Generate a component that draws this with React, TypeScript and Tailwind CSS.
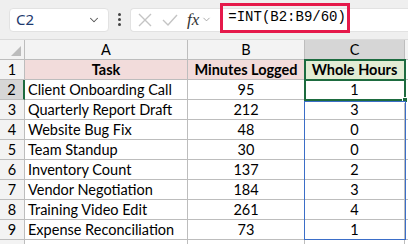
import { ChevronDown } from 'lucide-react';

const rows = [
  { task: 'Client Onboarding Call', mins: 95, hours: 1 },
  { task: 'Quarterly Report Draft', mins: 212, hours: 3 },
  { task: 'Website Bug Fix', mins: 48, hours: 0 },
  { task: 'Team Standup', mins: 30, hours: 0 },
  { task: 'Inventory Count', mins: 137, hours: 2 },
  { task: 'Vendor Negotiation', mins: 184, hours: 3 },
  { task: 'Training Video Edit', mins: 261, hours: 4 },
  { task: 'Expense Reconciliation', mins: 73, hours: 1 },
];

const cols = 'grid grid-cols-[25px_163px_117px_100px_3px]';
const cell = 'h-[20px] border-r border-b border-[#bdbdbd] flex items-center text-[14.5px] text-black';

export default function App() {
  return (
    <div className="w-[408px] h-[244px] overflow-hidden bg-white font-['Lato',sans-serif]">
      {/* Formula bar */}
      <div className="h-[40px] bg-[#efefef] flex items-center pl-[9px] gap-[9px] border-b border-[#dadada]">
        <div className="w-[100px] h-[24px] bg-white rounded-[4px] border border-[#e2e2e2] flex items-center justify-between pl-[6px] pr-[7px]">
          <span className="text-[15px] text-[#1e3a6e] font-['Noto_Sans',sans-serif]">C2</span>
          <ChevronDown size={14} strokeWidth={1.8} className="text-[#555]" />
        </div>
        <div className="flex flex-col gap-[2px] w-[3px]">
          <span className="w-[3px] h-[3px] rounded-full bg-[#444]" />
          <span className="w-[3px] h-[3px] rounded-full bg-[#444]" />
          <span className="w-[3px] h-[3px] rounded-full bg-[#444]" />
        </div>
        <div className="flex-1 h-[24px] bg-white rounded-l-[4px] border border-r-0 border-[#e2e2e2] flex items-center pl-[6px]">
          <svg width="14" height="14" viewBox="0 0 14 14" className="ml-[1px]">
            <path d="M1 1 L13 13 M13 1 L1 13" stroke="#c4c4c4" strokeWidth="1.4" />
          </svg>
          <svg width="16" height="14" viewBox="0 0 16 14" className="ml-[10px]">
            <path d="M1 7 L6 12 L15 2" stroke="#c4c4c4" strokeWidth="1.4" fill="none" />
          </svg>
          <span className="ml-[9px] text-[17px] italic text-[#333] font-['Liberation_Serif',serif]">fx</span>
          <ChevronDown size={11} strokeWidth={1.8} className="ml-[2px] text-[#999]" />
          <div className="relative -top-[2px] ml-[8px] h-[30px] w-[130px] border-[3px] border-[#e5194a] flex items-center pl-[5px]">
            <span className="text-[14px] text-black font-['Liberation_Mono',monospace]">=INT(B2:B9/60)</span>
          </div>
        </div>
      </div>

      {/* Sheet */}
      <div className="relative">
        <div className={`${cols} bg-[#f3f3f3]`}>
          <div className="h-[20px] border-r border-b border-[#bdbdbd] relative">
            <span className="absolute right-[3px] bottom-[3px] w-0 h-0 border-l-[10px] border-l-transparent border-b-[10px] border-b-[#bcbcbc]" />
          </div>
          <div className={`${cell} justify-center text-[#222]`}>A</div>
          <div className={`${cell} justify-center text-[#222]`}>B</div>
          <div className={`${cell} justify-center bg-[#d6d6d6] text-[#1d6b3f]`}>C</div>
          <div className="h-[20px] border-b border-[#bdbdbd]" />
        </div>

        <div className={cols}>
          <div className={`${cell} justify-center bg-[#f3f3f3] text-[#222]`}>1</div>
          <div className={`${cell} justify-center bg-[#f2dcdb] font-bold`}>Task</div>
          <div className={`${cell} justify-center bg-[#f2dcdb] font-bold`}>Minutes Logged</div>
          <div className={`${cell} justify-center bg-[#e2ecd4] font-bold`}>Whole Hours</div>
          <div className="h-[20px] border-b border-[#bdbdbd]" />
        </div>

        {rows.map((r, i) => (
          <div key={r.task} className={cols}>
            <div
              className={`${cell} justify-center ${
                i === 0 ? 'bg-[#d6d6d6] text-[#1d6b3f] border-r-2 border-r-[#1d6b3f]' : 'bg-[#f3f3f3] text-[#222]'
              }`}
            >
              {i + 2}
            </div>
            <div className={`${cell} pl-[3px]`}>{r.task}</div>
            <div className={`${cell} justify-center`}>{r.mins}</div>
            <div className={`${cell} justify-center`}>{r.hours}</div>
            <div className="h-[20px] border-b border-[#bdbdbd]" />
          </div>
        ))}

        <div className={cols}>
          <div className="h-[20px] border-r border-[#bdbdbd] bg-[#f3f3f3]" />
          <div className="h-[20px] border-r border-[#bdbdbd]" />
          <div className="h-[20px] border-r border-[#bdbdbd]" />
          <div className="h-[20px] border-r border-[#bdbdbd]" />
          <div />
        </div>

        {/* selection C1:C2 */}
        <div className="absolute left-[304px] top-[19px] w-[102px] h-[22px] border-2 border-[#1d6b3f]" />
        <div className="absolute left-[304px] top-[39px] w-[102px] h-[22px] border-2 border-[#1d6b3f]" />
        <div className="absolute left-[402px] top-[57px] w-[6px] h-[6px] bg-[#1d6b3f] border border-white" />
        {/* range C3:C9 */}
        <div className="absolute left-[304px] top-[61px] w-[102px] h-[139px] border border-[#3b6ec8]" />
      </div>
    </div>
  );
}
